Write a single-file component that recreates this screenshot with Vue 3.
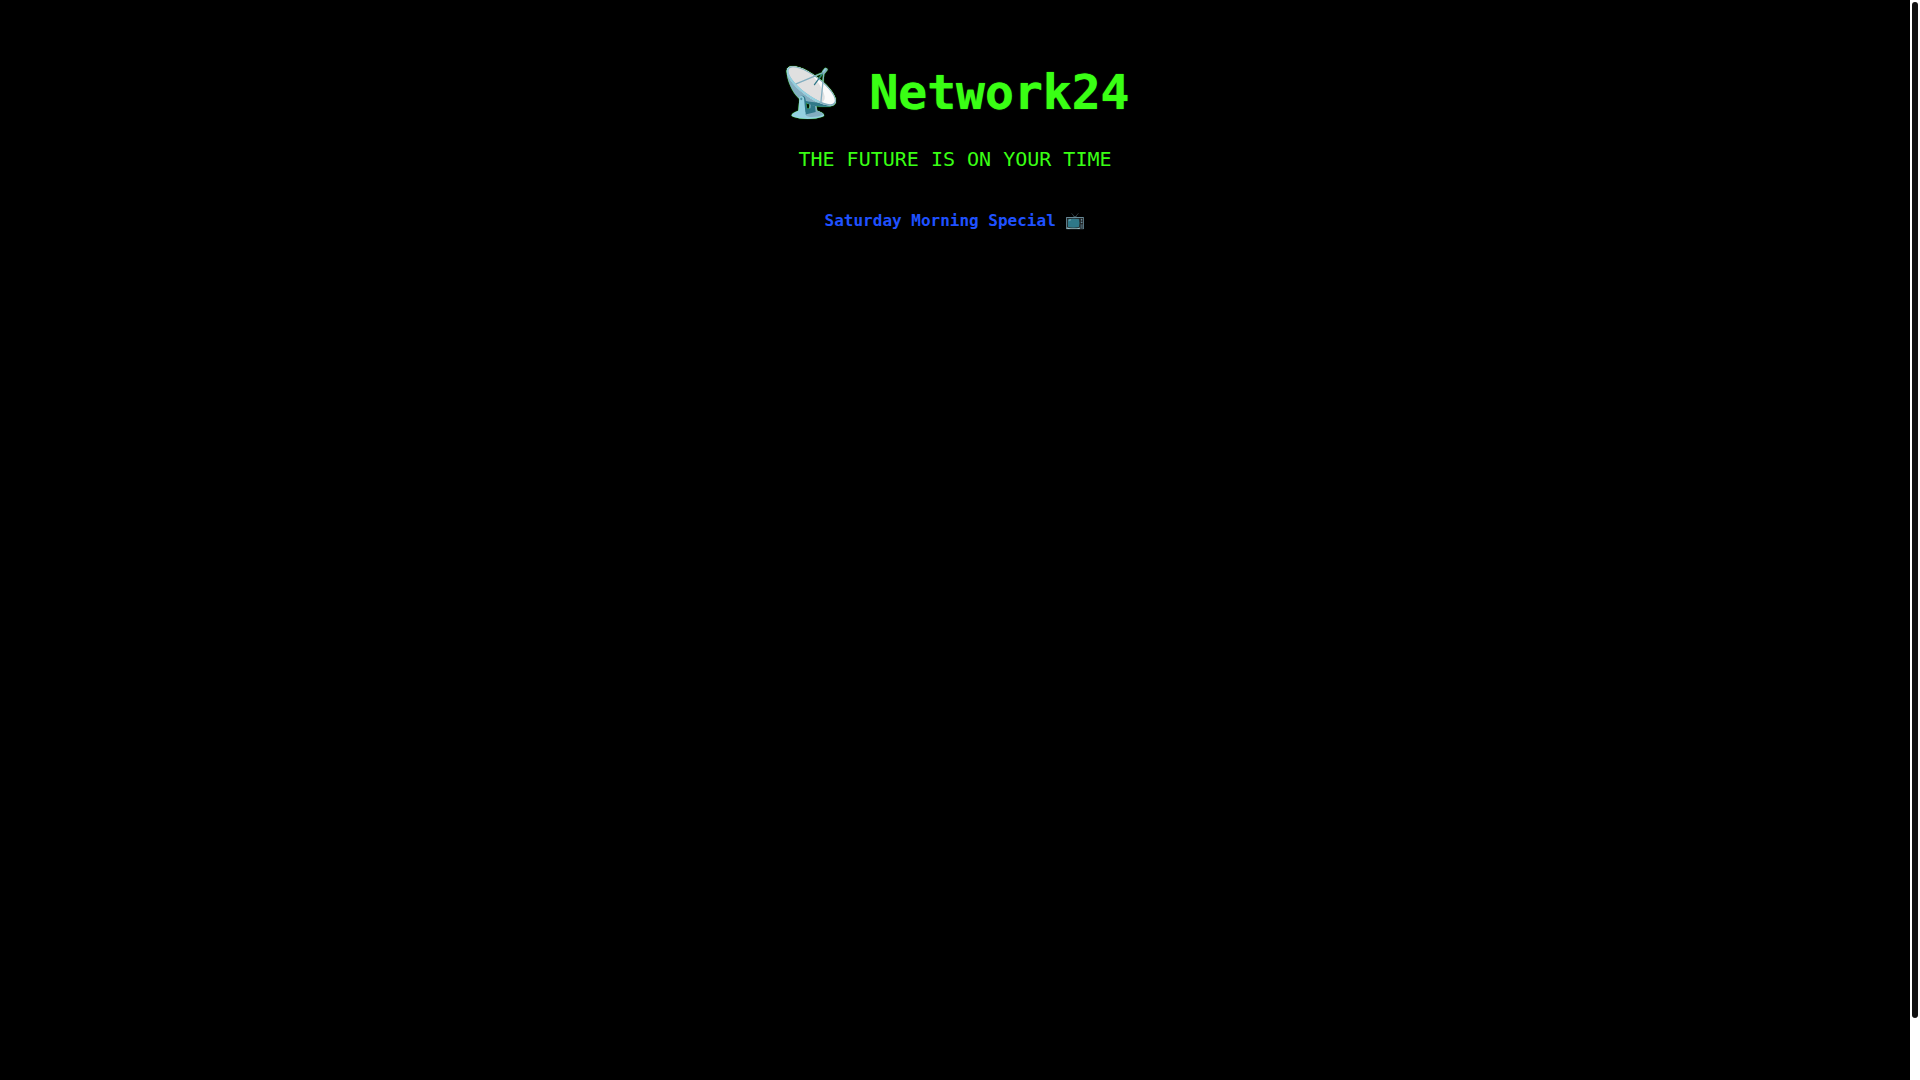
<script setup>
const brand = '📡 Network24'
const tagline = 'THE FUTURE IS ON YOUR TIME'
const programme = 'Saturday Morning Special 📺'
</script>

<template>
  <div class="window">
    <main class="screen">
      <h1 class="brand">{{ brand }}</h1>
      <p class="tagline">{{ tagline }}</p>
      <h2 class="programme">{{ programme }}</h2>
    </main>
    <div class="scroll-rail" aria-hidden="true">
      <div class="scroll-thumb"></div>
    </div>
  </div>
</template>

<style>
body {
  margin: 0;
  background: #000;
}
</style>

<style scoped>
.window {
  display: flex;
  height: 100vh;
}

.screen {
  box-sizing: border-box;
  flex: 1;
  min-width: 0;
  padding: 64px 32px;
  background: #000;
  color: #39ff14;
  font-family: "DejaVu Sans Mono", monospace;
  text-align: center;
}

.brand {
  margin: 0 0 27px;
  font-size: 48px;
  font-weight: 700;
  line-height: 56px;
  text-shadow: 0 0 1px #39ff14;
}

.tagline {
  margin: 0;
  font-size: 20px;
  line-height: 24px;
}

.programme {
  margin: 40px 0 0;
  color: #1f51ff;
  font-size: 16px;
  font-weight: 700;
  line-height: 20px;
}

.scroll-rail {
  box-sizing: border-box;
  flex: none;
  width: 10px;
  padding: 2px;
  background: #fff;
}

.scroll-thumb {
  height: 94.4%;
  border-radius: 3px;
  background: #111;
}
</style>
